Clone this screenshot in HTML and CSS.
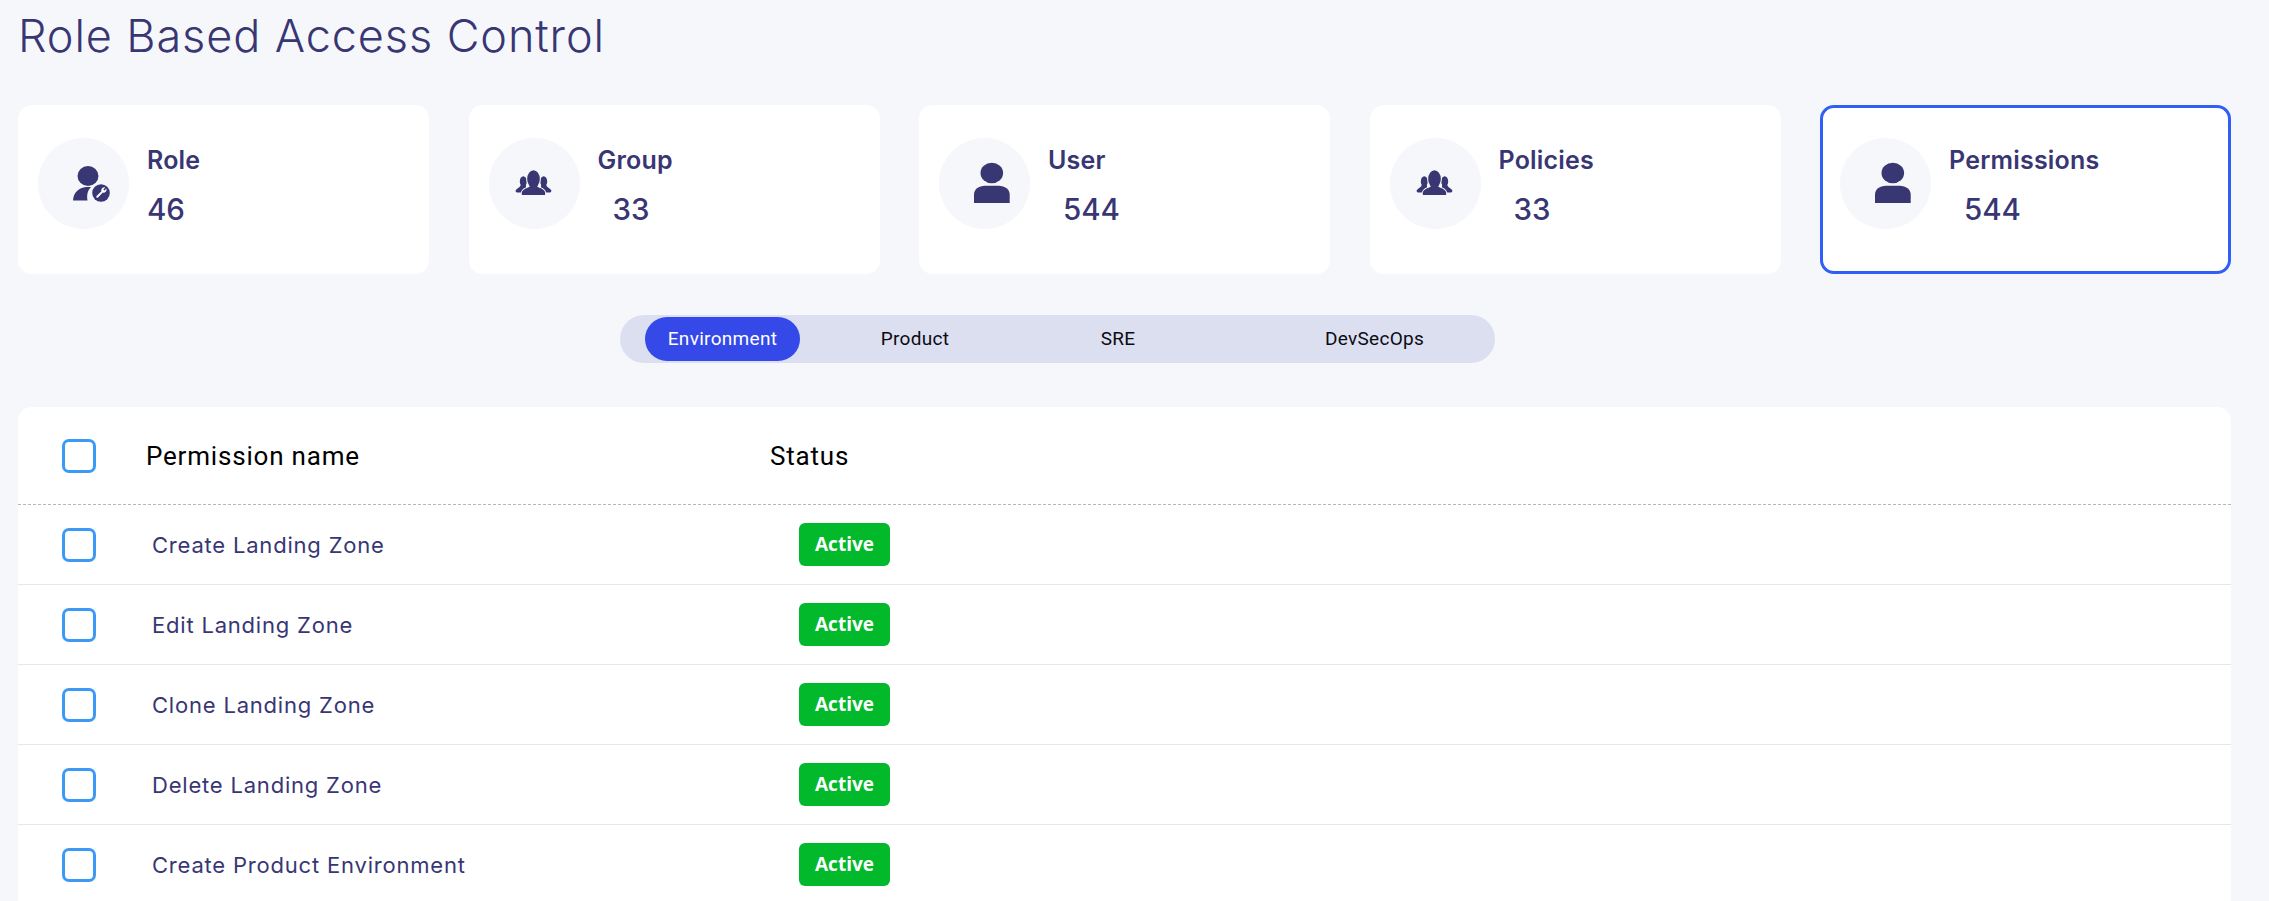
FILE: index.html
```html
<!DOCTYPE html>
<html lang="en">
<head>
  <meta charset="UTF-8">
  <title>Role Based Access Control</title>
  <link rel="stylesheet" href="styles.css">
</head>
<body>
  <div class="page">
    <h1 class="title">Role Based Access Control</h1>

    <!-- Summary cards -->
    <div class="cards">
      <div class="card">
        <div class="card-icon">
          <svg viewBox="0 0 91 91" width="91" height="91">
            <ellipse cx="50" cy="38" rx="10.5" ry="10"/>
            <path d="M35 62.5c.5-8 6-13 13-13.500h5c-3 3-4.500 7-3.500 13.500z"/>
            <circle cx="63" cy="55" r="8.800"/>
            <path class="wrench" d="M59.300 58.700l4.600-4.600"/>
            <path class="wrench-head" d="M63.300 53a3.200 3.200 0 0 1 4-3.600l-2 2 1.200 1.200 2-2a3.200 3.200 0 0 1-3.800 4z"/>
          </svg>
        </div>
        <div class="card-text">
          <div class="card-label">Role</div>
          <div class="card-value">46</div>
        </div>
      </div>

      <div class="card">
        <div class="card-icon">
          <svg viewBox="0 0 91 91" width="91" height="91">
            <use href="#group-icon"/>
          </svg>
        </div>
        <div class="card-text">
          <div class="card-label">Group</div>
          <div class="card-value indent">33</div>
        </div>
      </div>

      <div class="card">
        <div class="card-icon">
          <svg viewBox="0 0 91 91" width="91" height="91">
            <use href="#user-icon"/>
          </svg>
        </div>
        <div class="card-text">
          <div class="card-label">User</div>
          <div class="card-value indent">544</div>
        </div>
      </div>

      <div class="card">
        <div class="card-icon">
          <svg viewBox="0 0 91 91" width="91" height="91">
            <use href="#group-icon"/>
          </svg>
        </div>
        <div class="card-text">
          <div class="card-label">Policies</div>
          <div class="card-value indent">33</div>
        </div>
      </div>

      <div class="card selected">
        <div class="card-icon">
          <svg viewBox="0 0 91 91" width="91" height="91">
            <use href="#user-icon"/>
          </svg>
        </div>
        <div class="card-text">
          <div class="card-label">Permissions</div>
          <div class="card-value indent">544</div>
        </div>
      </div>
    </div>

    <!-- Tabs -->
    <div class="tabs">
      <div class="tab active">Environment</div>
      <div class="tab">Product</div>
      <div class="tab">SRE</div>
      <div class="tab last">DevSecOps</div>
    </div>

    <!-- Permission table -->
    <div class="table">
      <div class="row head">
        <span class="check"></span>
        <span class="head-name">Permission name</span>
        <span class="head-status">Status</span>
      </div>
      <div class="row">
        <span class="check"></span>
        <span class="name">Create Landing Zone</span>
        <span class="badge">Active</span>
      </div>
      <div class="row">
        <span class="check"></span>
        <span class="name">Edit Landing Zone</span>
        <span class="badge">Active</span>
      </div>
      <div class="row">
        <span class="check"></span>
        <span class="name">Clone Landing Zone</span>
        <span class="badge">Active</span>
      </div>
      <div class="row">
        <span class="check"></span>
        <span class="name">Delete Landing Zone</span>
        <span class="badge">Active</span>
      </div>
      <div class="row">
        <span class="check"></span>
        <span class="name">Create Product Environment</span>
        <span class="badge">Active</span>
      </div>
    </div>
  </div>

  <!-- Shared icons -->
  <svg class="icon-defs" width="0" height="0">
    <defs>
      <g id="group-icon">
        <ellipse cx="34.300" cy="43.500" rx="3.500" ry="5.200"/>
        <path d="M27.800 54.500c-1.800-1-1.500-2.500.4-3.800 2-1.300 3-1.900 3.300-3.400h5.500v7.200z"/>
        <ellipse cx="54.700" cy="43.500" rx="3.500" ry="5.200"/>
        <path d="M61.200 54.500c1.800-1 1.500-2.500-.4-3.800-2-1.300-3-1.900-3.300-3.400H52v7.200z"/>
        <g class="group-front">
          <ellipse cx="44.500" cy="41" rx="6.300" ry="8.800"/>
          <path d="M33 57c-1-3.500 1-5.500 5-7 2.500-.9 3.500-1.700 3.500-3.500h6c0 1.800 1 2.600 3.500 3.500 4 1.500 6 3.500 5 7z"/>
        </g>
        <ellipse cx="44.500" cy="41" rx="6.300" ry="8.800"/>
        <path d="M33 57c-1-3.500 1-5.500 5-7 2.500-.9 3.500-1.700 3.500-3.500h6c0 1.800 1 2.600 3.500 3.500 4 1.500 6 3.500 5 7z"/>
      </g>
      <g id="user-icon">
        <ellipse cx="52.800" cy="35" rx="11.300" ry="10.300"/>
        <path d="M35 65v-8.500c0-5 4.500-8.800 11-8.800h13.500c6.500 0 11.200 3.800 11.200 8.800V65z"/>
      </g>
    </defs>
  </svg>
</body>
</html>
```

FILE: styles.css
```css
html, body {
  margin: 0;
  height: 100%;
  overflow: hidden;
}

body {
  background: #f6f7fb;
  color: #383673;
  font-family: Inter, sans-serif;
}

.page {
  padding: 0 38px 0 18px;
}

.title {
  margin: 0;
  height: 105px;
  font-size: 45px;
  line-height: 72px;
  font-weight: 300;
  letter-spacing: 0.9px;
}

.cards {
  display: grid;
  grid-template-columns: repeat(5, 1fr);
  gap: 39.500px;
}

.card {
  display: flex;
  height: 169px;
  box-sizing: border-box;
  padding: 33px 20px;
  background: #fff;
  border-radius: 14px;
}

.card.selected {
  padding: 30px 17px;
  border: 3px solid #2f5ff5;
}

.card-icon {
  width: 91px;
  height: 91px;
  flex-shrink: 0;
  border-radius: 50%;
  background: #f6f7fb;
}

.card-icon svg {
  display: block;
  fill: #383673;
}

.card-icon .wrench {
  stroke: #fff;
  stroke-width: 2;
  stroke-linecap: round;
  fill: none;
}

.card-icon .wrench-head {
  fill: #fff;
}

/* light outline so the front figure stands off the two behind it */
.group-front {
  fill: #f6f7fb;
  stroke: #f6f7fb;
  stroke-width: 2;
}

.card-text {
  margin-left: 18px;
}

.card-label {
  font-size: 25px;
  font-weight: 600;
  line-height: 30px;
  letter-spacing: 0.2px;
  margin-top: 7px;
}

.card-value {
  font-size: 29.500px;
  font-weight: 500;
  line-height: 36px;
  margin-top: 16px;
}

.card-value.indent {
  padding-left: 15px;
}

.tabs {
  display: grid;
  grid-template-columns: 155px 230px 176px 1fr;
  width: 875px;
  height: 48px;
  box-sizing: border-box;
  margin: 41px 0 44px 602px;
  padding: 2px 0 3px 25px;
  background: #dcdff0;
  border-radius: 24px;
}

.tab {
  font-family: Roboto, sans-serif;
  font-size: 19px;
  line-height: 44px;
  letter-spacing: 0.3px;
  text-align: center;
  color: #0b0b14;
}

.tab.active {
  background: #3549e8;
  color: #fff;
  border-radius: 22px;
}

.tab.last {
  padding-left: 119px;
  text-align: left;
}

.table {
  background: #fff;
  border-radius: 14px 14px 0 0;
}

.row {
  display: flex;
  align-items: center;
  height: 80px;
  box-sizing: border-box;
  border-bottom: 1px solid #e6e6ea;
  padding-left: 44px;
}

.row.head {
  height: 98px;
  border-bottom: 1px dashed #b5b5b8;
  color: #000;
  font-family: Roboto, sans-serif;
  font-size: 26px;
  letter-spacing: 0.8px;
}

.check {
  width: 34px;
  height: 34px;
  box-sizing: border-box;
  flex-shrink: 0;
  border: 3px solid #3b9af5;
  border-radius: 7px;
}

.head-name {
  margin-left: 50px;
  width: 624px;
}

.name {
  margin-left: 56px;
  width: 647px;
  font-size: 22px;
  letter-spacing: 0.8px;
}

.badge {
  width: 91px;
  height: 43px;
  background: #02b92b;
  border-radius: 6px;
  color: #fff;
  font-family: "Open Sans", sans-serif;
  font-size: 19px;
  font-weight: 700;
  line-height: 43px;
  text-align: center;
}

.icon-defs {
  position: absolute;
}
```
